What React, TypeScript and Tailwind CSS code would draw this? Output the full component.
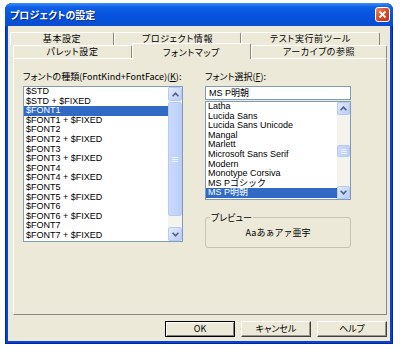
import React from 'react';

const jp = "font-['Noto_Sans_CJK_JP',sans-serif] [font-feature-settings:'palt']";
const ui = "font-['Liberation_Sans','Noto_Sans_CJK_JP',sans-serif]";

const kinds = [
  '$STD',
  '$STD + $FIXED',
  '$FONT1',
  '$FONT1 + $FIXED',
  '$FONT2',
  '$FONT2 + $FIXED',
  '$FONT3',
  '$FONT3 + $FIXED',
  '$FONT4',
  '$FONT4 + $FIXED',
  '$FONT5',
  '$FONT5 + $FIXED',
  '$FONT6',
  '$FONT6 + $FIXED',
  '$FONT7',
  '$FONT7 + $FIXED',
];

const faces = [
  'Latha',
  'Lucida Sans',
  'Lucida Sans Unicode',
  'Mangal',
  'Marlett',
  'Microsoft Sans Serif',
  'Modern',
  'Monotype Corsiva',
  'MS Pゴシック',
  'MS P明朝',
];

const Arrow = ({ up }: { up?: boolean }) => (
  <svg width="7" height="5" viewBox="0 0 7 5">
    <path
      d={up ? 'M0.6 4.2 L3.5 1.2 L6.4 4.2' : 'M0.6 0.8 L3.5 3.8 L6.4 0.8'}
      fill="none"
      stroke="#4D6185"
      strokeWidth="1.6"
    />
  </svg>
);

const ScrollButton = ({ up, size }: { up?: boolean; size: string }) => (
  <div
    className={`flex shrink-0 items-center justify-center rounded-[2px] border border-[#B7CAF3] bg-[linear-gradient(135deg,#E2EAFE,#B9CCF8)] ${size}`}
  >
    <Arrow up={up} />
  </div>
);

const ScrollBar = ({ width, btn, thumb }: { width: string; btn: string; thumb: string }) => (
  <div className={`flex h-full shrink-0 flex-col bg-[#F4F3EE] ${width}`}>
    <ScrollButton up size={btn} />
    <div className="flex flex-1 flex-col">
      <div
        className={`flex flex-col items-center justify-center gap-[1px] rounded-[2px] border border-[#B7CAF3] bg-[linear-gradient(90deg,#CADAFD,#BDD0FA)] ${thumb}`}
      >
        <div className="h-px w-[6px] bg-[#EEF3FE]" />
        <div className="h-px w-[6px] bg-[#EEF3FE]" />
        <div className="h-px w-[6px] bg-[#EEF3FE]" />
      </div>
    </div>
    <ScrollButton size={btn} />
  </div>
);

const ListBox = ({
  items,
  selected,
  box,
  children,
}: {
  items: string[];
  selected: number;
  box: string;
  children: React.ReactNode;
}) => (
  <div className={`flex overflow-hidden border border-[#7F9DB9] bg-white ${box}`}>
    <div className="flex-1 overflow-hidden">
      {items.map((t, i) => (
        <div
          key={t}
          className={`h-[9.6px] whitespace-nowrap pl-[2px] text-[9px] leading-[9.6px] ${ui} ${
            i === selected ? 'bg-[#316AC5] text-white' : 'text-black'
          }`}
        >
          {t}
        </div>
      ))}
    </div>
    {children}
  </div>
);

const Tab = ({ label, w, selected }: { label: string; w: string; selected?: boolean }) => (
  <div
    className={`flex items-center justify-center rounded-t-[2px] border-l border-r border-t border-l-white border-r-[#8A8A84] border-t-white bg-[#ECE9D8] text-[9px] leading-[10px] tracking-[0.6px] text-black ${jp} ${w} ${
      selected ? 'relative z-10 -mb-px h-[16px] pt-[2px]' : 'h-[13px]'
    }`}
  >
    {label}
  </div>
);

const Btn = ({ label, def }: { label: string; def?: boolean }) => (
  <button
    className={`flex h-[16px] w-[70px] items-center justify-center bg-[#ECE9D8] text-[9px] leading-[10px] text-black ${jp} ${
      def
        ? 'border border-black shadow-[inset_1px_1px_0_#fff,inset_-1px_-1px_0_#808080]'
        : 'border border-b-[#404040] border-l-white border-r-[#404040] border-t-white shadow-[inset_-1px_-1px_0_#9A9890]'
    }`}
  >
    {label}
  </button>
);

export default function App() {
  return (
    <div className="min-h-screen bg-white pl-[5px] pt-[3px]">
      <div className="flex h-[341px] w-[388px] flex-col overflow-hidden rounded-t-[7px] bg-[#0843D4] shadow-[inset_0_0_0_1px_#0024A8]">
        {/* title bar */}
        <div className="flex h-[23px] shrink-0 items-center bg-[linear-gradient(to_bottom,#3F8FF8_0%,#0E5FE6_18%,#0553DE_55%,#0A4DCF_100%)] pl-[5px] pr-[3px]">
          <span className={`text-[10px] font-bold leading-[12px] text-white [text-shadow:1px_1px_0_#0A2A8A] ${jp}`}>
            プロジェクトの設定
          </span>
          <div className="ml-auto flex h-[15px] w-[15px] items-center justify-center rounded-[3px] border border-white bg-[linear-gradient(135deg,#F08A68,#D8461F_55%,#C0381A)]">
            <svg width="9" height="9" viewBox="0 0 9 9">
              <path d="M1.5 1.5 L7.5 7.5 M7.5 1.5 L1.5 7.5" stroke="#fff" strokeWidth="1.8" />
            </svg>
          </div>
        </div>

        {/* body */}
        <div className="mx-[3px] mb-[3px] flex flex-1 flex-col bg-[#ECE9D8] pt-[6px]">
          <div className="ml-[2px] flex h-[13px]">
            <Tab label="基本設定" w="w-[104px]" />
            <Tab label="プロジェクト情報" w="w-[127px]" />
            <Tab label="テスト実行前ツール" w="w-[139px]" />
          </div>
          <div className="ml-[5px] flex h-[13px] items-end">
            <Tab label="パレット設定" w="w-[119px]" />
            <Tab label="フォントマップ" w="w-[119px]" selected />
            <Tab label="アーカイブの参照" w="w-[136px]" />
          </div>

          {/* panel */}
          <div className="ml-[5px] flex h-[257px] w-[374px] border border-b-[#8A8A84] border-l-white border-r-[#8A8A84] border-t-white bg-[#ECE9D8] pl-[9px] pt-[12px]">
            <div className="flex w-[160px] flex-col">
              <div className={`h-[11px] whitespace-nowrap text-[9px] leading-[11px] text-black ${jp}`}>
                フォントの種類(FontKind+FontFace)(<span className="underline">K</span>):
              </div>
              <ListBox items={kinds} selected={2} box="mt-[4px] h-[156px] w-[160px]">
                <ScrollBar width="w-[14px]" btn="h-[14px]" thumb="mt-[1px] h-[114px]" />
              </ListBox>
            </div>

            <div className="ml-[22px] flex w-[146px] flex-col">
              <div className={`h-[11px] whitespace-nowrap text-[9px] leading-[11px] text-black ${jp}`}>
                フォント選択(<span className="underline">F</span>):
              </div>
              <div
                className={`mt-[4px] flex h-[14px] items-center border border-[#7F9DB9] bg-white pl-[3px] text-[9px] leading-[11px] text-black ${ui}`}
              >
                MS P明朝
              </div>
              <ListBox items={faces} selected={9} box="mt-[1px] h-[99px] w-[146px]">
                <ScrollBar width="w-[13px]" btn="h-[13px]" thumb="mt-[30px] h-[12px]" />
              </ListBox>

              <fieldset className="mt-[13px] rounded-[3px] border border-[#C5C3B6] px-0">
                <legend className={`ml-[4px] px-[1px] text-[9px] leading-[9px] text-black ${jp}`}>
                  プレビュー
                </legend>
                <div className="flex h-[25px] items-center justify-center pb-[4px] font-['Noto_Sans_CJK_JP',sans-serif] text-[9px] leading-[11px] text-black">
                  Aaあぁアァ亜宇
                </div>
              </fieldset>
            </div>
          </div>

          {/* buttons */}
          <div className="mt-[6px] flex justify-end gap-[6px] pr-[3px]">
            <Btn label="OK" def />
            <Btn label="キャンセル" />
            <Btn label="ヘルプ" />
          </div>
        </div>
      </div>
    </div>
  );
}
